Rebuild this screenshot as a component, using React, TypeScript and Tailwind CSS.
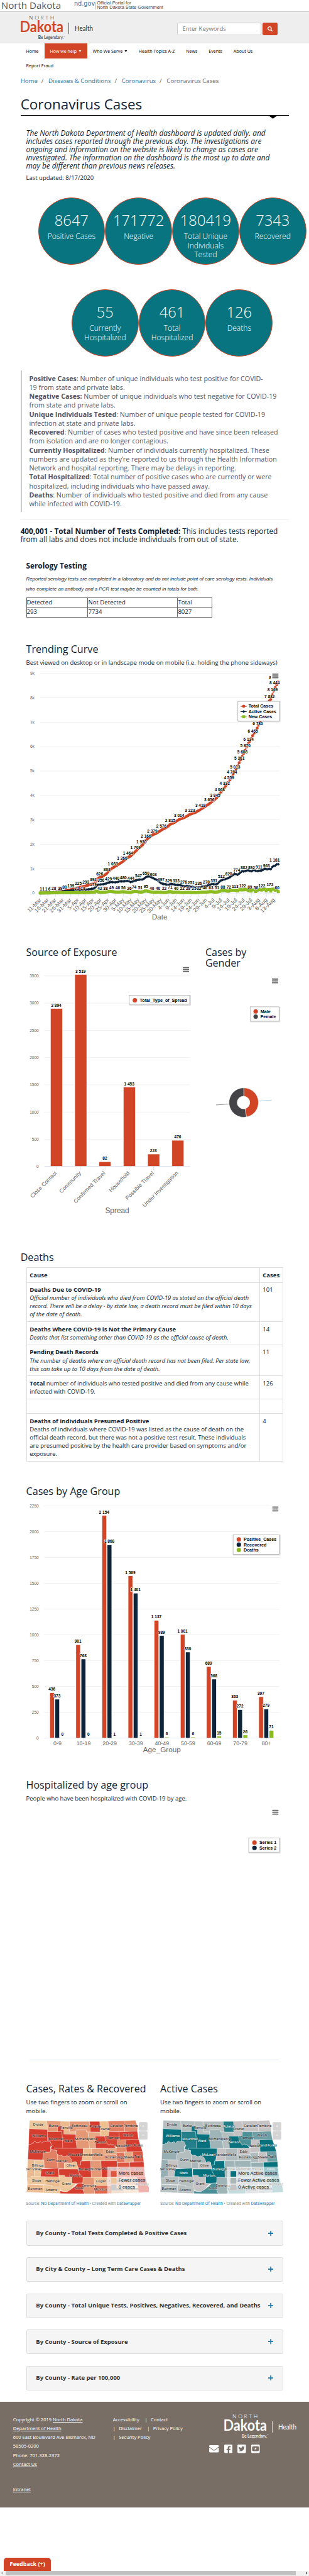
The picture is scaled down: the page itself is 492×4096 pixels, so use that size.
import type { ReactNode } from "react";
import { FaEnvelope, FaFacebookSquare, FaSearch, FaTwitterSquare, FaYoutubeSquare } from "react-icons/fa";

const ORANGE = "#d14526";
const NAVY = "#0d233a";
const GREEN = "#8bbc21";

/* ---------- Logo ---------- */

function Logo({ brand, ink, className }: { brand: string; ink: string; className?: string }) {
  return (
    <svg viewBox="50 38 210 72" className={`h-[72px] w-[210px] shrink-0 font-[Lato,sans-serif] ${className ?? ""}`}>
      <text x="77" y="52" fontSize="14.5" fontWeight="300" fill={ink} textLength="68">NORTH</text>
      <text x="52.5" y="85" fontSize="43.5" fontWeight="600" fill={brand} textLength="28" lengthAdjust="spacingAndGlyphs">D</text>
      <text x="80" y="85" fontSize="41" fontWeight="700" fill={brand} textLength="89.5" lengthAdjust="spacingAndGlyphs">akota</text>
      <text x="102" y="103.5" fontSize="11.5" fontWeight="500" fill={ink} textLength="68">Be Legendary.</text>
      <text x="170" y="98" fontSize="5" fill={ink}>™</text>
      <line x1="184" x2="184" y1="60" y2="90.5" stroke={ink} strokeWidth="1.3" />
      <text x="200" y="82" fontSize="18.5" fill={ink} textLength="49" lengthAdjust="spacingAndGlyphs">Health</text>
    </svg>
  );
}

/* ---------- Header ---------- */

function Caret() {
  return (
    <svg viewBox="0 0 8 5" className="ml-[5px] mt-[2px] h-[4.5px] w-[8px]">
      <path d="M0 0h8L4 5z" fill="currentColor" />
    </svg>
  );
}

function NavItem({ label, active, menu }: { label: string; active?: boolean; menu?: boolean }) {
  return (
    <a className={`flex h-[40px] items-center px-[15px] text-[12px] whitespace-nowrap ${active ? "bg-[#d14526] text-white" : "text-black"}`}>
      {label}
      {menu && <Caret />}
    </a>
  );
}

function Header() {
  return (
    <header>
      <div className="flex h-[32px] items-start border-b border-[#ccc]">
        <span className="ml-[3px] text-[25.5px] leading-[30px] whitespace-nowrap text-[#555]">North Dakota</span>
        <span className="ml-[35px] mt-[2px] font-['DejaVu_Sans',sans-serif] text-[16.4px] leading-[18px] text-[#3b6ea8]">nd.gov</span>
        <span className="mt-[6px] ml-px h-[19px] w-px bg-[#bbb]" />
        <span className="mt-[4px] ml-[3px] font-['Liberation_Sans',sans-serif] text-[12.5px] leading-[10.5px] whitespace-nowrap text-[#444]">
          Official Portal for
          <br />
          North Dakota State Government
        </span>
      </div>
      <div className="flex h-[84px] bg-[#eee] pl-[50px]">
        <Logo brand={ORANGE} ink="#333" className="mt-[6px]" />
        <div className="mt-[28px] ml-[216px] flex h-[34px] w-[225px] items-center rounded-[4px] border border-[#ccc] bg-white pl-[12px] text-[16px] text-[#777]">
          Enter Keywords
        </div>
        <div className="mt-[28px] ml-[4px] flex h-[34px] w-[40px] items-center justify-center rounded-[4px] bg-[#d14526] text-white">
          <FaSearch className="h-[14px] w-[14px]" />
        </div>
      </div>
      <nav className="flex h-[80px] w-[720px] flex-wrap pl-[55px]">
        <NavItem label="Home" />
        <NavItem label="How we help" active menu />
        <NavItem label="Who We Serve" menu />
        <NavItem label="Health Topics A-Z" />
        <NavItem label="News" />
        <NavItem label="Events" />
        <NavItem label="About Us" />
        <NavItem label="Report Fraud" />
      </nav>
    </header>
  );
}

function TitleBlock() {
  return (
    <div className="h-[115px] px-[55px] pt-[9px]">
      <div className="flex h-[24px] gap-[10px] text-[16.25px] leading-[24px] whitespace-nowrap text-[#1878ab]">
        <span>Home</span>
        <span className="text-[#666]">/</span>
        <span className="ml-[3px]">Diseases &amp; Conditions</span>
        <span className="text-[#666]">/</span>
        <span className="ml-[3px]">Coronavirus</span>
        <span className="text-[#666]">/</span>
        <span className="ml-[3px] text-[#666]">Coronavirus Cases</span>
      </div>
      <div className="relative mt-[31px] h-[51px] w-[720px] border-b-[1.7px] border-black">
        <h1 className="text-[37.9px] leading-[40px] whitespace-nowrap">Coronavirus Cases</h1>
        <svg viewBox="0 0 22 8" className="absolute top-[50px] left-[666px] h-[8px] w-[22px]">
          <path d="M0 0h22L11 8z" />
        </svg>
      </div>
    </div>
  );
}

/* ---------- Figures ---------- */

function Circle({ value, label }: { value: string; label: ReactNode }) {
  return (
    <div className="h-[180px] w-[180px] rounded-full border-[3px] border-[#d14526] bg-[#087480] text-center font-light whitespace-nowrap text-white">
      <div className="mt-[36px] text-[40px] leading-[44px]">{value}</div>
      <div className="mt-[10px] text-[20.4px] leading-[25px]">{label}</div>
    </div>
  );
}

function Definitions() {
  const B = ({ children }: { children: ReactNode }) => <b className="font-bold">{children}</b>;
  return (
    <blockquote className="ml-[55px] h-[380px] w-[720px] border-l-[5px] border-[#ccc] pt-[10.5px] pl-[20px] text-[18.1px] leading-[24px] whitespace-nowrap text-[#525466]">
      <p><B>Positive Cases</B>: Number of unique individuals who test positive for COVID-<br />19 from state and private labs.</p>
      <p><B>Negative Cases:</B> Number of unique individuals who test negative for COVID-19<br />from state and private labs.</p>
      <p><B>Unique Individuals Tested</B>: Number of unique people tested for COVID-19<br />infection at state and private labs.</p>
      <p><B>Recovered</B>: Number of cases who tested positive and have since been released<br />from isolation and are no longer contagious.</p>
      <p><B>Currently Hospitalized</B>: Number of individuals currently hospitalized. These<br />numbers are updated as they’re reported to us through the Health Information<br />Network and hospital reporting. There may be delays in reporting.</p>
      <p><B>Total Hospitalized</B>: Total number of positive cases who are currently or were<br />hospitalized, including individuals who have passed away.</p>
      <p><B>Deaths</B>: Number of individuals who tested positive and died from any cause<br />while infected with COVID-19.</p>
    </blockquote>
  );
}

/* ---------- Chart parts ---------- */

function Menu({ x, y }: { x: number; y: number }) {
  return (
    <g>
      <rect x={x - 4} y={y - 5} width="24" height="22" fill="#fff" />
      <path d={`M${x + 1.5} ${y + 1.5}h14M${x + 1.5} ${y + 6.5}h14M${x + 1.5} ${y + 11.5}h14`} stroke="#666" strokeWidth="3" strokeLinecap="round" />
    </g>
  );
}

function LegendBox({ x, y, w, h, textX, markX, first, items }: { x: number; y: number; w: number; h: number; textX: number; markX: number; first: number; items: [string, string][] }) {
  return (
    <g>
      <rect x={x + 1} y={y + 1} width={w + 1} height={h + 1} fill="none" stroke="#000" strokeOpacity="0.15" strokeWidth="2.5" />
      <rect x={x} y={y} width={w} height={h} fill="#fff" stroke="#999" />
      {items.map(([name, color], i) => (
        <g key={name}>
          <circle cx={markX} cy={first - 4.2 + i * 14} r="6" fill={color} />
          <text x={textX} y={first + i * 14} fontSize="12" fontWeight="bold">{name}</text>
        </g>
      ))}
    </g>
  );
}

function DataLabel({ x, y, children }: { x: number; y: number; children: ReactNode }) {
  return (
    <text x={x} y={y} fontSize="11" fontWeight="bold" textAnchor="middle" stroke="#fff" strokeWidth="2" paintOrder="stroke" strokeLinejoin="round">
      {children}
    </text>
  );
}

/* ---------- Trending curve ---------- */

type Pt = [number, number];
const px = (v: number) => v * 0.5293;

const TOTAL: Pt[] = [[204, 1], [250, 6], [273, 28], [305, 45], [328, 80], [359, 139], [397, 225], [435, 293], [450, 331], [473, 392], [484, 450], [495, 585], [505, 640], [520, 680], [542, 803], [557, 950], [572, 1033], [619, 1266], [649, 1464], [664, 1520], [687, 1709], [717, 1930], [728, 2020], [740, 2166], [772, 2379], [795, 2457], [818, 2576], [850, 2720], [863, 2815], [885, 2890], [908, 3014], [940, 3110], [963, 3223], [990, 3300], [1016, 3418], [1061, 3656], [1091, 3845], [1103, 3930], [1114, 4068], [1139, 4331], [1161, 4559], [1176, 4784], [1192, 5013], [1203, 5180], [1214, 5361], [1229, 5608], [1244, 5870], [1259, 6134], [1270, 6260], [1282, 6465], [1306, 6780], [1321, 7050], [1340, 7350], [1366, 7882], [1376, 7970], [1382, 8169], [1397, 8444], [1411, 8647]];
const ACTIVE: Pt[] = [[204, 1], [270, 28], [328, 75], [365, 110], [400, 125], [435, 140], [473, 179], [482, 220], [495, 340], [512, 356], [530, 370], [550, 429], [560, 450], [588, 440], [610, 485], [625, 480], [650, 500], [664, 444], [680, 500], [702, 547], [725, 560], [740, 650], [752, 690], [765, 660], [778, 603], [800, 520], [817, 397], [855, 329], [866, 385], [893, 333], [910, 335], [931, 276], [950, 290], [969, 251], [1007, 236], [1025, 260], [1046, 290], [1075, 370], [1100, 355], [1118, 512], [1142, 570], [1160, 620], [1190, 790], [1206, 750], [1228, 900], [1237, 882], [1255, 940], [1275, 892], [1288, 950], [1300, 895], [1330, 930], [1343, 1010], [1353, 963], [1366, 1000], [1374, 975], [1382, 1090], [1397, 1130], [1405, 1190], [1411, 1181]];
const NEW: Pt[] = [[204, 2], [244, 6], [273, 10], [320, 15], [389, 21], [420, 18], [450, 20], [480, 40], [488, 90], [506, 25], [535, 38], [556, 75], [580, 46], [600, 40], [625, 56], [656, 26], [665, 30], [680, 74], [700, 55], [716, 35], [740, 95], [755, 60], [785, 30], [801, 40], [833, 22], [850, 35], [863, 71], [875, 25], [893, 40], [924, 22], [954, 29], [984, 22], [992, 10], [1009, 32], [1046, 39], [1070, 63], [1090, 35], [1105, 51], [1120, 88], [1145, 110], [1155, 60], [1170, 120], [1195, 113], [1206, 85], [1215, 150], [1230, 122], [1245, 160], [1260, 100], [1275, 80], [1286, 170], [1297, 56], [1308, 150], [1328, 122], [1342, 170], [1350, 90], [1362, 172], [1373, 80], [1384, 190], [1397, 110], [1404, 140], [1411, 60]];

function sample(knots: Pt[]): Pt[] {
  return Array.from({ length: 159 }, (_, i) => {
    const cx = 204 + (i * (1411 - 204)) / 158;
    let k = 1;
    while (k < knots.length - 1 && knots[k][0] < cx) k++;
    const [x0, y0] = knots[k - 1];
    const [x1, y1] = knots[k];
    const v = y0 + ((y1 - y0) * (cx - x0)) / (x1 - x0);
    return [px(cx), 2393.5 - v * 0.06543];
  });
}

const toPath = (pts: Pt[]) => "M" + pts.map(([x, y]) => `${x.toFixed(2)} ${y.toFixed(2)}`).join("L");

const TOTAL_LABELS: Pt[] = [[305, 39], [328, 80], [359, 139], [397, 225], [435, 293], [473, 392], [505, 626], [542, 803], [572, 1033], [619, 1266], [649, 1464], [687, 1709], [717, 1930], [740, 2166], [772, 2379], [818, 2576], [863, 2815], [908, 3014], [963, 3223], [1016, 3418], [1061, 3656], [1091, 3845], [1114, 4068], [1139, 4331], [1161, 4559], [1176, 4784], [1192, 5013], [1214, 5361], [1229, 5608], [1244, 5870], [1260, 6134], [1282, 6465], [1307, 6780], [1367, 7882], [1382, 8169], [1392, 8444]];
const ACTIVE_LABELS: Pt[] = [[473, 179], [512, 356], [550, 429], [588, 440], [625, 480], [664, 444], [702, 547], [740, 650], [778, 603], [817, 397], [855, 329], [893, 333], [931, 276], [969, 251], [1007, 236], [1046, 278], [1085, 351], [1122, 512], [1160, 620], [1200, 774], [1237, 882], [1275, 892], [1313, 911], [1351, 963], [1392, 1181]];
const NEW_LABELS: Pt[] = [[207, 1], [220, 1], [234, 1], [250, 6], [273, 28], [389, 21], [420, 18], [506, 42], [535, 38], [565, 49], [597, 46], [625, 56], [656, 26], [680, 74], [711, 51], [740, 95], [770, 40], [801, 40], [833, 22], [863, 71], [893, 40], [924, 22], [954, 29], [984, 25], [1009, 32], [1039, 46], [1070, 63], [1100, 51], [1130, 88], [1160, 72], [1192, 113], [1230, 122], [1267, 89], [1297, 56], [1328, 122], [1369, 172], [1405, 60]];
const DATES = ["11-Mar", "16-Mar", "21-Mar", "26-Mar", "31-Mar", "5-Apr", "10-Apr", "15-Apr", "20-Apr", "25-Apr", "30-Apr", "5-May", "10-May", "15-May", "20-May", "25-May", "30-May", "4-Jun", "9-Jun", "14-Jun", "19-Jun", "24-Jun", "29-Jun", "4-Jul", "9-Jul", "14-Jul", "19-Jul", "24-Jul", "29-Jul", "3-Aug", "8-Aug", "13-Aug"];

const spaced = (v: number) => (v >= 1000 ? `${Math.floor(v / 1000)} ${String(v % 1000).padStart(3, "0")}` : String(v));

function TrendChart() {
  const total = sample(TOTAL);
  const active = sample(ACTIVE);
  const fresh = sample(NEW);
  return (
    <svg viewBox="0 1790 830 710" className="block h-[710px] w-[830px] font-['Liberation_Sans',Arial,sans-serif]">
      {Array.from({ length: 10 }, (_, i) => (
        <g key={i}>
          <line x1="107" x2="750" y1={2393.5 - i * 65.43} y2={2393.5 - i * 65.43} stroke={i ? "#e6e6e6" : "#ccd6eb"} />
          <text x="92.5" y={2397.5 - i * 65.43} fontSize="11" textAnchor="end" fill="#666">{i ? `${i}k` : "0"}</text>
        </g>
      ))}
      {DATES.map((d, i) => {
        const x = 108.5 + i * 20.22;
        return (
          <g key={d}>
            <line x1={x} x2={x} y1="2393.5" y2="2403.5" stroke="#ccd6eb" />
            <text x={x + 3.5} y="2413" fontSize="15" textAnchor="end" fill="#666" transform={`rotate(-45 ${x + 3.5} 2413)`}>{d}</text>
          </g>
        );
      })}
      <text x="428.5" y="2464" fontSize="19.5" textAnchor="middle" fill="#666">Date</text>
      <path d={toPath(total)} fill="none" stroke={ORANGE} strokeWidth="2" />
      {total.map(([x, y], i) => <circle key={i} cx={x} cy={y} r="4" fill={ORANGE} />)}
      <path d={toPath(active)} fill="none" stroke={NAVY} strokeWidth="2" />
      {active.map(([x, y], i) => <path key={i} d={`M${x} ${y - 4}l4 4l-4 4l-4-4z`} fill={NAVY} />)}
      <path d={toPath(fresh)} fill="none" stroke={GREEN} strokeWidth="2" />
      {fresh.map(([x, y], i) => <rect key={i} x={x - 4} y={y - 4} width="8" height="8" fill={GREEN} />)}
      {TOTAL_LABELS.map(([x, v]) => <DataLabel key={x} x={px(x)} y={2387 - v * 0.06543}>{spaced(v)}</DataLabel>)}
      {ACTIVE_LABELS.map(([x, v]) => <DataLabel key={x} x={px(x)} y={2387 - v * 0.06543}>{spaced(v)}</DataLabel>)}
      {NEW_LABELS.map(([x, v]) => <DataLabel key={x} x={px(x)} y={2387 - v * 0.06543}>{v}</DataLabel>)}
      <DataLabel x={725} y={1820.5}>8</DataLabel>
      <Menu x={730.5} y={1805} />
      <rect x="639.5" y="1880.5" width="112" height="53" fill="none" stroke="#000" strokeOpacity="0.15" strokeWidth="2.5" />
      <rect x="638.5" y="1879.5" width="111" height="52.5" fill="#fff" stroke="#999" />
      <path d="M645.5 1893h16.5" stroke={ORANGE} strokeWidth="2" />
      <circle cx="654" cy="1893" r="4.2" fill={ORANGE} />
      <path d="M645.5 1907h16.5" stroke={NAVY} strokeWidth="2" />
      <path d="M654 1903l4 4l-4 4l-4-4z" fill={NAVY} />
      <path d="M645.5 1921h16.5" stroke={GREEN} strokeWidth="2" />
      <rect x="650" y="1917" width="8" height="8" fill={GREEN} />
      <g fontSize="12" fontWeight="bold">
        <text x="667" y="1897">Total Cases</text>
        <text x="667" y="1911">Active Cases</text>
        <text x="667" y="1925">New Cases</text>
      </g>
    </svg>
  );
}

/* ---------- Source of exposure / gender ---------- */

const SPREAD: [string, number][] = [["Close Contact", 2894], ["Community", 3519], ["Confirmed Travel", 82], ["Household", 1453], ["Possible Travel", 223], ["Under Investigation", 476]];

function SpreadChart() {
  return (
    <svg viewBox="0 2568 530 720" className="block h-[720px] w-[530px] font-['Liberation_Sans',Arial,sans-serif]">
      {Array.from({ length: 8 }, (_, i) => (
        <g key={i}>
          <line x1="119" x2="510" y1={3127.5 - i * 73} y2={3127.5 - i * 73} stroke={i ? "#e6e6e6" : "#ccd6eb"} />
          <text x="104" y={3131.5 - i * 73} fontSize="11" textAnchor="end" fill="#666">{i * 500}</text>
        </g>
      ))}
      {SPREAD.map(([name, v], i) => {
        const x = 151.5 + i * 65.2;
        const y = 3127 - v * 0.146;
        return (
          <g key={name}>
            <rect x={x - 16} y={y - 0.5} width="32" height={3127.5 - y} fill={ORANGE} stroke="#fff" />
            <line x1={x} x2={x} y1="3127.5" y2="3137" stroke="#ccd6eb" />
            <DataLabel x={x - 0.5} y={y - 5.5}>{spaced(v)}</DataLabel>
            <text x={x + 2} y="3146" fontSize="15" textAnchor="end" fill="#666" transform={`rotate(-45 ${x + 2} 3146)`}>{name}</text>
          </g>
        );
      })}
      <line x1="119" x2="510" y1="3127.5" y2="3127.5" stroke="#ccd6eb" />
      <text x="314.5" y="3252.5" fontSize="20" textAnchor="middle" fill="#666">Spread</text>
      <Menu x={490.5} y={2593} />
      <LegendBox x={347} y={2668.5} w={162} h={24} textX={375} markX={362} first={2686} items={[["Total_Type_of_Spread", ORANGE]]} />
    </svg>
  );
}

function GenderChart() {
  return (
    <svg viewBox="530 2597 300 691" className="block h-[691px] w-[300px] font-['Liberation_Sans',Arial,sans-serif]">
      <Menu x={730.5} y={2622} />
      <LegendBox x={672} y={2698} w={77.5} h={38} textX={700} markX={687} first={2714.5} items={[["Male", ORANGE], ["Female", "#434348"]]} />
      <path d="M694.5 2950.5L730 2948" stroke="#7cb5ec" />
      <path d="M615.5 2958.5L580.5 2961" stroke="#434348" />
      <path d="M655 2915A39.5 39.5 0 0 1 662.3 2993.3L658.2 2971A17 17 0 0 0 655 2937.5Z" fill={ORANGE} stroke="#fff" />
      <path d="M662.3 2993.3A39.5 39.5 0 1 1 655 2915L655 2937.5A17 17 0 1 0 658.2 2971Z" fill="#434348" stroke="#fff" />
    </svg>
  );
}

/* ---------- Deaths ---------- */

function DeathRow({ count, children }: { count?: string; children?: ReactNode }) {
  return (
    <tr className="align-top">
      <td className="border border-[#ddd] p-[8px]">{children ?? <br />}</td>
      <td className="border border-[#ddd] p-[8px]">{count}</td>
    </tr>
  );
}

function Deaths() {
  return (
    <section className="h-[650px] pt-[36.5px]">
      <h3 className="ml-[55px] text-[27.2px] leading-[30px]">Deaths</h3>
      <table className="mt-[10px] ml-[70px] w-[690px] border-collapse text-[16px] leading-[22px] whitespace-nowrap">
        <thead>
          <tr className="text-left">
            <th className="w-[627px] border border-b-[2px] border-[#ddd] p-[8px]">Cause</th>
            <th className="border border-b-[2px] border-[#ddd] p-[8px]">Cases</th>
          </tr>
        </thead>
        <tbody>
          <DeathRow count="101">
            <b>Deaths Due to COVID-19</b><br />
            <i className="text-[15.7px]">Official number of individuals who died from COVID-19 as stated on the official death<br />record. There will be a delay - by state law, a death record must be filed within 10 days<br />of the date of death.</i>
          </DeathRow>
          <DeathRow count="14">
            <b>Deaths Where COVID-19 is Not the Primary Cause</b><br />
            <i className="text-[15.7px]">Deaths that list something other than COVID-19 as the official cause of death.</i>
          </DeathRow>
          <DeathRow count="11">
            <b>Pending Death Records</b><br />
            <i className="text-[15.7px]">The number of deaths where an official death record has not been filed. Per state law,<br />this can take up to 10 days from the date of death.</i>
          </DeathRow>
          <DeathRow count="126">
            <b>Total</b> number of individuals who tested positive and died from any cause while<br />infected with COVID-19.
          </DeathRow>
          <DeathRow />
          <DeathRow count="4">
            <b>Deaths of Individuals Presumed Positive</b><br />
            Deaths of individuals where COVID-19 was listed as the cause of death on the<br />official death record, but there was not a positive test result. These individuals<br />are presumed positive by the health care provider based on symptoms and/or<br />exposure.
          </DeathRow>
        </tbody>
      </table>
    </section>
  );
}

/* ---------- Age groups ---------- */

const AGES: [string, number, number, number][] = [["0-9", 436, 373, 0], ["10-19", 901, 763, 0], ["20-29", 2154, 1868, 1], ["30-39", 1569, 1401, 1], ["40-49", 1137, 989, 6], ["50-59", 1001, 830, 6], ["60-69", 689, 568, 15], ["70-79", 363, 272, 26], ["80+", 397, 279, 71]];

function AgeChart() {
  const K = 622.3 / 2250;
  const colors = [ORANGE, NAVY, GREEN];
  return (
    <svg viewBox="0 4016 830 734" className="block h-[734px] w-[830px] font-['Liberation_Sans',Arial,sans-serif]">
      {Array.from({ length: 10 }, (_, i) => (
        <g key={i}>
          <line x1="119" x2="750" y1={4657.7 - i * 69.14} y2={4657.7 - i * 69.14} stroke={i ? "#e6e6e6" : "#ccd6eb"} />
          <text x="104" y={4661.7 - i * 69.14} fontSize="11" textAnchor="end" fill="#666">{i * 250}</text>
        </g>
      ))}
      {AGES.map(([name, ...vals], i) => {
        const x = 153.6 + i * 70.12;
        return (
          <g key={name}>
            {vals.map((v, j) => (
              <rect key={j} x={x - 20 + j * 14} y={4657.2 - v * K - 0.5} width="12" height={v * K + 0.8} fill={colors[j]} stroke="#fff" />
            ))}
            <line x1={x} x2={x} y1="4658" y2="4667.5" stroke="#ccd6eb" />
            <text x={x + 0.5} y="4676.5" fontSize="15" textAnchor="middle" fill="#666">{name}</text>
          </g>
        );
      })}
      {[0, 1, 2].map((j) =>
        AGES.map(([name, ...vals], i) => (
          <DataLabel key={name + j} x={153.2 + i * 70.12 - 14 + j * 14} y={4651.5 - vals[j] * K}>{spaced(vals[j])}</DataLabel>
        )),
      )}
      <text x="434.5" y="4696" fontSize="19.8" textAnchor="middle" fill="#666">Age_Group</text>
      <Menu x={730.5} y={4037} />
      <LegendBox x={625.5} y={4112.5} w={124} h={52.5} textX={654} markX={641} first={4129.5} items={[["Positive_Cases", ORANGE], ["Recovered", NAVY], ["Deaths", GREEN]]} />
    </svg>
  );
}

function HospitalizedChart() {
  return (
    <svg viewBox="0 4834 830 696" className="block h-[696px] w-[830px] font-['Liberation_Sans',Arial,sans-serif]">
      <Menu x={730.5} y={4850.5} />
      <LegendBox x={667.5} y={4925.5} w={82} h={38.5} textX={696} markX={683} first={4942.5} items={[["Series 1", ORANGE], ["Series 2", NAVY]]} />
      <line x1="80" x2="750" y1="5520.5" y2="5520.5" stroke="#ccd6eb" />
    </svg>
  );
}

/* ---------- County maps ---------- */

const R = "#d63d2f";
const T = "#07727e";
const G0 = "#c4c2c3";
const G1 = "#b5bebf";
const G2 = "#9fb4b7";

const COUNTIES: [string, string, string][] = [
  ["38,37 178,42 181,112 34,105", "#edc79b", G1],
  ["178,42 292,45 290,85 264,85 264,128 183,128", "#e59875", G1],
  ["290,45 357,46 360,130 411,130 411,148 313,148 313,112 290,112", "#ebb98e", G1],
  ["357,46 520,46 528,131 495,131 495,115 411,115 411,130 360,130", "#e59875", G1],
  ["520,46 603,46 606,131 528,131", R, "#237f89"],
  ["603,46 670,44 675,130 673,163 608,163", "#eec08f", G0],
  ["670,44 800,41 804,127 675,130", "#e28064", G0],
  ["800,41 890,37 908,90 905,125 804,127", "#e38a6a", G0],
  ["34,105 181,112 183,205 170,210 150,205 137,222 125,210 110,215 98,218 88,212 75,208 65,225 55,220 48,232 30,230", R, T],
  ["30,230 48,232 55,220 65,225 75,208 88,212 98,218 110,215 125,210 137,222 150,205 170,210 183,205 205,210 212,228 220,240 205,250 208,270 205,293 150,295 143,355 24,352", R, "#97afb3"],
  ["181,128 298,128 302,180 305,262 241,262 241,278 215,272 208,262 220,240 212,228 205,210 186,205", "#d43d2e", "#237f89"],
  ["264,85 290,85 290,112 313,112 313,148 411,150 411,200 420,264 305,262 302,180 298,128 264,128", R, T],
  ["411,115 495,115 495,131 508,131 515,200 520,264 420,264 411,200", "#e59875", G2],
  ["508,131 606,133 608,163 566,165 570,262 520,264 515,200", "#e6a883", G1],
  ["566,165 643,165 648,195 668,230 678,238 690,225 700,238 708,228 718,240 733,262 570,262", R, T],
  ["675,130 757,130 762,195 745,195 747,250 733,250 718,240 708,228 700,238 690,225 678,238 668,230 648,195 643,163 673,163", "#d84433", "#4a9096"],
  ["757,130 905,125 915,190 762,195", R, "#6f9fa4"],
  ["745,195 812,195 820,262 816,292 735,296 733,262 747,250", "#e38a6a", G0],
  ["812,195 915,190 930,235 948,290 818,292", R, T],
  ["241,262 470,264 470,305 458,362 450,365 450,395 420,397 418,375 395,370 383,380 372,350 358,330 340,322 315,330 290,318 270,318 255,300 258,280 241,278", R, T],
  ["470,264 536,265 540,362 460,362 470,305", "#edbd8f", G0],
  ["536,265 635,264 638,310 640,362 540,362", "#e6a07c", "#b0bbbd"],
  ["635,264 735,262 737,312 637,315", "#e6a883", G0],
  ["637,315 740,312 741,362 640,362", "#e59875", "#b0bbbd"],
  ["735,296 803,294 806,375 745,377 741,362", "#e0765b", "#b0bbbd"],
  ["803,294 870,291 874,372 806,375", "#e6a883", G0],
  ["870,291 948,290 957,372 874,372", "#dc5641", "#6f9fa4"],
  ["150,295 205,293 208,268 241,278 258,280 255,300 263,315 265,425 155,420 153,358 143,355", "#e28064", G1],
  ["263,315 270,318 290,318 315,330 340,322 358,330 372,350 383,380 318,380 318,428 266,425", "#e28064", "#a9b7ba"],
  ["318,380 383,380 395,370 410,370 418,378 420,397 428,412 425,430 318,428", "#eec08f", G0],
  ["75,357 153,358 155,420 135,425 126,490 76,490", "#edc79b", G0],
  ["24,352 75,357 76,490 50,488 50,502 16,500", "#ebb98e", "#97afb3"],
  ["133,428 270,422 273,493 126,490", R, T],
  ["275,430 425,430 432,450 445,478 468,497 472,515 468,540 435,542 405,548 378,543 378,495 275,490", R, T],
  ["450,365 530,363 535,497 468,497 445,478 432,450 428,412 420,397 450,395", R, T],
  ["530,363 613,363 618,497 535,497", "#e59875", G2],
  ["613,363 741,362 748,495 618,497", R, G2],
  ["745,377 844,375 850,492 748,495", "#dc5641", "#97afb3"],
  ["844,375 957,372 960,415 968,490 850,492", R, T],
  ["50,488 163,490 163,555 20,552 16,500 50,502", "#edc79b", G1],
  ["163,492 273,493 277,478 285,575 218,572 218,560 163,555", "#edbd8f", "#b8bfc0"],
  ["275,478 320,480 322,495 378,495 378,543 412,545 375,590 340,612 310,608 285,600", "#edc79b", G0],
  ["20,552 152,558 152,620 12,614", "#ebb98e", G1],
  ["152,556 218,560 218,572 285,575 285,626 150,620", "#edc79b", "#b8bfc0"],
  ["285,605 310,610 340,612 375,590 412,560 430,542 465,542 465,590 480,628 285,626", R, "#4a9096"],
  ["468,497 556,497 562,560 562,627 480,628 465,590 465,542", "#e59875", G2],
  ["556,497 662,497 662,562 562,562", "#f0c090", "#b8bfc0"],
  ["562,562 700,562 700,626 562,627", "#e0694f", "#6fa8ad"],
  ["662,497 803,494 803,560 662,562", "#e9a58a", G1],
  ["803,494 902,490 905,558 803,560", "#e9a58a", G1],
  ["700,562 805,560 805,623 700,626", "#e8b596", G1],
  ["805,560 905,558 915,619 805,623", "#edc79b", G1],
  ["902,490 968,490 985,550 1000,580 1002,615 915,619", R, "#6fa8ad"],
];

const NAMES: [string, number, number, boolean?][] = [
  ["Divide", 107, 81], ["Burke", 230, 93], ["Renville", 335, 108], ["Bottineau", 438, 90], ["Rolette", 565, 95, true],
  ["Towner", 641, 114], ["Cavalier", 738, 92], ["Pembina", 851, 90], ["Williams", 114, 174, true], ["Mountrail", 252, 198, true],
  ["Ward", 349, 213, true], ["McHenry", 461, 198], ["Pierce", 541, 198], ["Benson", 609, 222, true], ["Ramsey", 712, 187],
  ["Walsh", 831, 168], ["Grand Forks", 871, 249, true], ["Nelson", 777, 251], ["McKenzie", 104, 298], ["McLean", 402, 324, true],
  ["Sheridan", 500, 324], ["Wells", 590, 321], ["Eddy", 685, 298], ["Foster", 690, 344], ["Griggs", 772, 342],
  ["Steele", 838, 342], ["Traill", 912, 339], ["Dunn", 208, 366], ["Mercer", 298, 374], ["Billings", 104, 408],
  ["Golden Valley", 48, 441], ["Oliver", 372, 410], ["Stark", 201, 468, true], ["Burleigh", 487, 438, true], ["Kidder", 577, 438],
  ["Stutsman", 683, 435], ["Barnes", 798, 441], ["Cass", 903, 438, true], ["Morton", 406, 489, true], ["Slope", 94, 531],
  ["Hettinger", 226, 534], ["Logan", 614, 537], ["LaMoure", 735, 534], ["Ransom", 850, 532], ["Grant", 334, 558],
  ["Emmons", 518, 570], ["Richland", 947, 563], ["Bowman", 83, 594], ["Adams", 213, 606], ["Sioux", 437, 591],
  ["McIntosh", 619, 603], ["Dickey", 745, 600], ["Sargent", 862, 597],
];

function CountyMap({ teal, boxX, legend }: { teal?: boolean; boxX: number; legend: [string, string][] }) {
  return (
    <svg viewBox="12 30 990 600" className="block h-[200px] w-[330px] font-[Roboto,sans-serif]">
      {COUNTIES.map(([pts, a, b]) => (
        <polygon key={pts} points={pts} fill={teal ? b : a} stroke="#fff" strokeOpacity="0.6" strokeWidth="2.5" />
      ))}
      {NAMES.map(([name, x, y, dark]) => {
        const white = teal && dark;
        return (
          <text key={name} x={x} y={y} fontSize="29.5" textAnchor="middle" fill={white ? "#fff" : "#222"} stroke={white ? "#0a6670" : "#fff"} strokeOpacity={white ? 0.8 : 0.4} strokeWidth="6" strokeLinejoin="round" paintOrder="stroke">
            {name}
          </text>
        );
      })}
      <rect x={boxX} y="411" width={1010 - boxX} height="217" fill="#fff" fillOpacity="0.6" />
      {legend.map(([name, color], i) => (
        <g key={name}>
          <rect x={boxX + 30} y={446 + i * 54.5} width="45" height="45" fill={color} />
          <text x={boxX + 91} y={477 + i * 55.5} fontSize="38.5" fill="#222">{name}</text>
        </g>
      ))}
      {[51, 123].map((y, i) => (
        <g key={y}>
          <rect x="918" y={y} width="69" height="69" rx="8" fill="#d4d4d4" />
          <path d={i ? `M944 ${y + 33}h18` : `M944 ${y + 33}h18M953 ${y + 24}v18`} stroke="#fff" strokeWidth="3" />
        </g>
      ))}
    </svg>
  );
}

function MapColumn({ title, children }: { title: string; children: ReactNode }) {
  return (
    <div className="w-[330px] whitespace-nowrap">
      <h3 className="text-[27px] leading-[30px]">{title}</h3>
      <p className="mt-[9px] text-[16.2px] leading-[24px]">Use two fingers to zoom or scroll on<br />mobile.</p>
      <div className="mt-[8.5px]">{children}</div>
      <p className="mt-[17.5px] font-[Roboto,sans-serif] text-[11.3px] leading-[20px] text-[#888]">
        Source: <a className="text-[#1787c2]">ND Department Of Health</a> • Created with <a className="text-[#1787c2]">Datawrapper</a>
      </p>
    </div>
  );
}

/* ---------- Accordions, footer ---------- */

function Panel({ title }: { title: string }) {
  return (
    <div className="flex h-[66px] items-center justify-between rounded-[4px] border border-b-2 border-[#ddd] bg-[#f5f5f5] px-[25px] text-[16px] font-bold whitespace-nowrap text-[#333]">
      {title}
      <svg viewBox="0 0 14 14" className="h-[14px] w-[14px] shrink-0">
        <path d="M0 7h14M7 0v14" stroke="#1878b0" strokeWidth="3" />
      </svg>
    </div>
  );
}

function Footer() {
  return (
    <footer className="flex h-[283px] bg-[#796e65] pl-[35px] text-[12.7px] leading-[24px] whitespace-nowrap text-white">
      <div className="w-[268px] pt-[35px]">
        Copyright © 2019 <a className="underline">North Dakota<br />Department of Health</a>
        <br />600 East Boulevard Ave Bismarck, ND
        <br />58505-0200
        <br />Phone: 701-328-2372
        <br /><a className="underline">Contact Us</a>
        <p className="mt-[44px]"><a className="underline">Intranet</a></p>
      </div>
      <div className="w-[249px] pt-[35px]">
        <div className="flex"><span>Accessibility</span><span className="ml-[15px]">|</span><span className="ml-[9px]">Contact</span></div>
        <div className="flex"><span>|</span><span className="ml-[9px]">Disclaimer</span><span className="ml-[14px]">|</span><span className="ml-[9px]">Privacy Policy</span></div>
        <div className="flex"><span>|</span><span className="ml-[9px]">Security Policy</span></div>
      </div>
      <div className="pt-[31px]">
        <Logo brand="#fff" ink="#fff" className="ml-[45px]" />
        <div className="mt-[11px] ml-[10px] flex items-center">
          <FaEnvelope className="h-[26px] w-[26px]" />
          <FaFacebookSquare className="ml-[13.5px] h-[26px] w-[23px]" />
          <FaTwitterSquare className="ml-[13px] h-[26px] w-[23px]" />
          <FaYoutubeSquare className="ml-[14px] h-[26px] w-[23px]" />
        </div>
      </div>
    </footer>
  );
}

export default function App() {
  return (
    <div className="h-[6904px] w-[829.3px] overflow-hidden bg-white font-['Open_Sans',sans-serif] text-[16px] leading-[24px] text-[#0f1e36] [zoom:0.59328]">
      <Header />
      <TitleBlock />

      <section className="h-[219px] pt-[34px] pl-[70px] whitespace-nowrap">
        <p className="text-[19.9px] leading-[22px] italic">
          The North Dakota Department of Health dashboard is updated daily. and<br />
          includes cases reported through the previous day. The investigations are<br />
          ongoing and information on the website is likely to change as cases are<br />
          investigated. The information on the dashboard is the most up to date and<br />
          may be different than previous news releases.
        </p>
        <p className="mt-[11px] text-[16px]">Last updated: 8/17/2020</p>
      </section>

      <section className="h-[462px]">
        <div className="flex w-[830px] pl-[102px]">
          <Circle value="8647" label="Positive Cases" />
          <Circle value="171772" label="Negative" />
          <Circle value="180419" label={<>Total Unique<br />Individuals<br />Tested</>} />
          <Circle value="7343" label="Recovered" />
        </div>
        <div className="mt-[66px] flex pl-[192px]">
          <Circle value="55" label={<>Currently<br />Hospitalized</>} />
          <Circle value="461" label={<>Total<br />Hospitalized</>} />
          <Circle value="126" label="Deaths" />
        </div>
      </section>

      <Definitions />

      <section className="h-[348px] pt-[20px] whitespace-nowrap">
        <hr className="ml-[55px] w-[720px] border-[#eee]" />
        <p className="mt-[18.5px] ml-[55px] text-[19.9px] leading-[22px]">
          <b>400,001 - Total Number of Tests Completed:</b> This includes tests reported<br />
          from all labs and does not include individuals from out of state.
        </p>
        <h4 className="mt-[49.5px] ml-[70px] text-[19.9px] leading-[22px] font-bold">Serology Testing</h4>
        <p className="mt-[12px] ml-[70px] font-['Liberation_Sans',Arial,sans-serif] text-[13.33px] leading-[26px] italic">
          Reported serology tests are completed in a laboratory and do not include point of care serology tests. Individuals<br />
          who complete an antibody and a PCR test maybe be counted in totals for both.
        </p>
        <table className="mt-[10px] ml-[70px] w-[500px] border-collapse border-[1.3px] border-black text-[16.2px] leading-[24px]">
          <tbody>
            <tr>
              <td className="w-[165px] border border-[#666]">Detected</td>
              <td className="w-[241px] border border-[#666]">Not Detected</td>
              <td className="border border-[#666]">Total</td>
            </tr>
            <tr>
              <td className="border border-[#666]">293</td>
              <td className="border border-[#666]">7734</td>
              <td className="border border-[#666]">8027</td>
            </tr>
          </tbody>
        </table>
      </section>

      <section className="h-[780px] pt-[5.5px] whitespace-nowrap">
        <h3 className="ml-[70px] text-[27.2px] leading-[30px]">Trending Curve</h3>
        <p className="mt-[9px] ml-[70px] text-[16.15px] leading-[24px]">Best viewed on desktop or in landscape mode on mobile (i.e. holding the phone sideways)</p>
        <div className="mt-[1.5px]"><TrendChart /></div>
      </section>

      <section className="flex h-[820px] w-[830px] pt-[38px]">
        <div className="w-[530px]">
          <h3 className="ml-[70px] text-[27.1px] leading-[30px]">Source of Exposure</h3>
          <SpreadChart />
        </div>
        <div className="w-[300px]">
          <h3 className="ml-[21px] text-[27.1px] leading-[29.5px]">Cases by<br />Gender</h3>
          <GenderChart />
        </div>
      </section>

      <Deaths />

      <section className="h-[780px] pt-[12.5px]">
        <h3 className="ml-[70px] text-[27.2px] leading-[30px]">Cases by Age Group</h3>
        <div className="mt-[3.5px]"><AgeChart /></div>
      </section>

      <section className="h-[780px] pt-[20.5px]">
        <h3 className="ml-[70px] text-[27.2px] leading-[30px]">Hospitalized by age group</h3>
        <p className="mt-[9px] ml-[70px]">People who have been hospitalized with COVID-19 by age.</p>
        <div className="mt-[0.5px]"><HospitalizedChart /></div>
      </section>

      <section className="flex h-[422.5px] gap-[30px] pt-[54.5px] pl-[70px]">
        <MapColumn title="Cases, Rates & Recovered">
          <CountyMap boxX={663} legend={[["More cases", "#dd553f"], ["Fewer cases", "#edc79b"], ["0 cases", "#cccccc"]]} />
        </MapColumn>
        <MapColumn title="Active Cases">
          <CountyMap teal boxX={549} legend={[["More Active cases", T], ["Fewer Active cases", "#aab7b9"], ["0 Active cases", "#c4c2c3"]]} />
        </MapColumn>
      </section>

      <section className="flex h-[484.5px] w-[760px] flex-col gap-[31px] pl-[70px]">
        <Panel title="By County - Total Tests Completed & Positive Cases" />
        <Panel title="By City & County – Long Term Care Cases & Deaths" />
        <Panel title="By County - Total Unique Tests, Positives, Negatives, Recovered, and Deaths" />
        <Panel title="By County - Source of Exposure" />
        <Panel title="By County - Rate per 100,000" />
      </section>

      <Footer />

      <div className="flex h-[184px] flex-col justify-end">
        <div className="ml-[10px] flex h-[34px] w-[127px] items-center justify-center rounded-t-[8px] bg-[#d14526] text-[15.2px] font-bold text-white">Feedback (+)</div>
        <div className="flex h-[14px] items-center bg-[#f1f1f1] px-[4px]">
          <svg viewBox="0 0 4 8" className="h-[8px] w-[4px]"><path d="M4 0v8L0 4z" fill="#a3a3a3" /></svg>
          <div className="mx-[7px] h-[12px] w-[779px] bg-[#c1c1c1]" />
          <svg viewBox="0 0 4 8" className="ml-auto h-[8px] w-[4px]"><path d="M0 0v8l4-4z" fill="#505050" /></svg>
        </div>
      </div>
    </div>
  );
}
